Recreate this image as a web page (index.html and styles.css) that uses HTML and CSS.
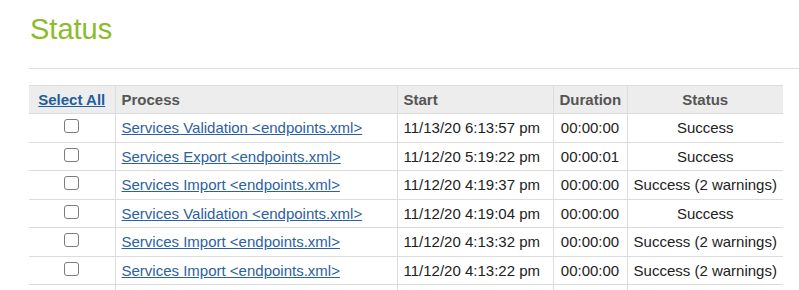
FILE: index.html
```html
<!DOCTYPE html>
<html>
<head>
<meta charset="utf-8">
<link rel="stylesheet" href="styles.css">
</head>
<body>
<div class="page">
  <h1 class="title">Status</h1>
  <hr class="rule">
  <table class="status-table">
    <thead>
      <tr>
        <th class="col-select"><a href="#" class="select-all">Select All</a></th>
        <th class="col-process">Process</th>
        <th class="col-start">Start</th>
        <th class="col-duration">Duration</th>
        <th class="col-status">Status</th>
      </tr>
    </thead>
    <tbody>
      <tr>
        <td class="cell-check"><input type="checkbox" class="check"></td>
        <td class="cell-process"><a href="#">Services Validation &lt;endpoints.xml&gt;</a></td>
        <td class="cell-start">11/13/20 6:13:57 pm</td>
        <td class="cell-duration">00:00:00</td>
        <td class="cell-status">Success</td>
      </tr>
      <tr>
        <td class="cell-check"><input type="checkbox" class="check"></td>
        <td class="cell-process"><a href="#">Services Export &lt;endpoints.xml&gt;</a></td>
        <td class="cell-start">11/12/20 5:19:22 pm</td>
        <td class="cell-duration">00:00:01</td>
        <td class="cell-status">Success</td>
      </tr>
      <tr>
        <td class="cell-check"><input type="checkbox" class="check"></td>
        <td class="cell-process"><a href="#">Services Import &lt;endpoints.xml&gt;</a></td>
        <td class="cell-start">11/12/20 4:19:37 pm</td>
        <td class="cell-duration">00:00:00</td>
        <td class="cell-status">Success (2 warnings)</td>
      </tr>
      <tr>
        <td class="cell-check"><input type="checkbox" class="check"></td>
        <td class="cell-process"><a href="#">Services Validation &lt;endpoints.xml&gt;</a></td>
        <td class="cell-start">11/12/20 4:19:04 pm</td>
        <td class="cell-duration">00:00:00</td>
        <td class="cell-status">Success</td>
      </tr>
      <tr>
        <td class="cell-check"><input type="checkbox" class="check"></td>
        <td class="cell-process"><a href="#">Services Import &lt;endpoints.xml&gt;</a></td>
        <td class="cell-start">11/12/20 4:13:32 pm</td>
        <td class="cell-duration">00:00:00</td>
        <td class="cell-status">Success (2 warnings)</td>
      </tr>
      <tr>
        <td class="cell-check"><input type="checkbox" class="check"></td>
        <td class="cell-process"><a href="#">Services Import &lt;endpoints.xml&gt;</a></td>
        <td class="cell-start">11/12/20 4:13:22 pm</td>
        <td class="cell-duration">00:00:00</td>
        <td class="cell-status">Success (2 warnings)</td>
      </tr>
      <tr class="cut">
        <td></td><td></td><td></td><td></td><td></td>
      </tr>
    </tbody>
  </table>
</div>
</body>
</html>
```

FILE: styles.css
```css
html, body {
  margin: 0;
  padding: 0;
  background: #fff;
}
body {
  font-family: "Liberation Sans", Arial, sans-serif;
  color: #222;
  overflow: hidden;
}
.page {
  padding-left: 29px;
}
.title {
  margin: 12px 0 0 1px;
  font-size: 29px;
  line-height: 34px;
  font-weight: normal;
  color: #8cbb2c;
}
.rule {
  margin: 22px 0 0 0;
  border: 0;
  border-top: 1px solid #dedede;
  height: 0;
}
.status-table {
  margin-top: 16px;
  border-collapse: collapse;
  width: 754px;
  table-layout: fixed;
  font-size: 15px;
}
.status-table th,
.status-table td {
  border: 1px solid #dcdcdc;
  height: 28.5px;
  padding: 0 6px;
  white-space: nowrap;
  box-sizing: border-box;
}
.status-table tr > :first-child {
  border-left: 0;
}
.status-table tr > :last-child {
  border-right: 0;
}
.status-table th {
  background: #ededed;
  color: #555;
  font-weight: bold;
  text-align: left;
  height: 28px;
}
.col-select { width: 86px; }
.col-process { width: 282px; }
.col-start { width: 156px; }
.col-duration { width: 74px; }
.col-status { width: 156px; }
.status-table th.col-select,
.status-table th.col-status,
.status-table th.col-duration {
  text-align: center;
}
.select-all {
  color: #1f5d9c;
  text-decoration: underline;
}
.cell-check {
  text-align: center;
}
.check {
  -webkit-appearance: none;
  appearance: none;
  width: 15px;
  height: 14px;
  margin: 0;
  border: 1px solid #7c7c7c;
  border-radius: 3px;
  background: #fff;
  vertical-align: middle;
  position: relative;
  top: -3px;
}
.cell-process a {
  color: #2c61a1;
  text-decoration: underline;
}
.cell-start {
  color: #222;
}
.cell-duration,
.cell-status {
  text-align: center;
  color: #222;
}
.cut td {
  height: 10px;
  border-bottom: 0;
}
```
